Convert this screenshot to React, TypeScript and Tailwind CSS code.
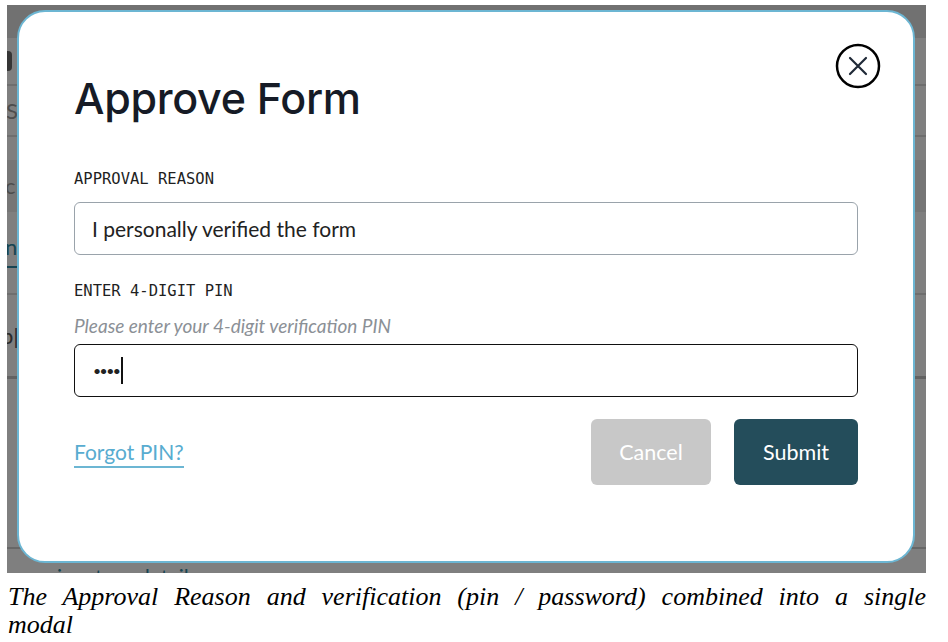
import React from 'react';

const sans = "font-['Lato','Open_Sans','Noto_Sans',sans-serif]";
const mono = "font-['DejaVu_Sans_Mono','Liberation_Mono',monospace]";

const CloseIcon: React.FC = () => (
  <svg width="46" height="46" viewBox="0 0 46 46" fill="none">
    <circle cx="23" cy="23" r="21" stroke="#000" strokeWidth="2.5" />
    <path d="M15 15 L31 31 M31 15 L15 31" stroke="#1f2937" strokeWidth="2.2" strokeLinecap="round" />
  </svg>
);

// the page behind the dialog, only its left edge shows
const BackPage: React.FC = () => (
  <div className={`flex flex-col bg-white ${sans}`}>
    <div className="shrink-0 h-[33px] bg-[#e2e2e2]" />
    <div className="shrink-0 h-[48px] flex items-center border-b-2 border-[#dcdcdc]">
      <div className="ml-[-10px] w-[15px] h-[20px] rounded bg-[#6b6b6b]" />
    </div>
    <div className="shrink-0 h-[51px] flex items-center border-b-2 border-[#dcdcdc] text-[22px] text-[#9a9a9a] leading-none">
      <span className="ml-[-1px]">S</span>
    </div>
    <div className="shrink-0 h-[23px]" />
    <div className="shrink-0 h-[52px] flex items-center bg-[#ececec] text-[22px] text-[#9a9a9a] leading-none">
      <span className="ml-[-2px]">c</span>
    </div>
    <div className="shrink-0 h-[56px] flex items-end">
      <div className="w-[20px] border-b-2 border-[#2f8aa6] text-[22px] leading-none text-[#2f8aa6] pb-[8px]">
        <span className="ml-[-2px]">n</span>
      </div>
    </div>
    <div className="shrink-0 h-[27px] border-b-2 border-[#dcdcdc]" />
    <div className="shrink-0 h-[84px] flex items-center border-b-[3px] border-[#c4c4c4] text-[22px] text-[#555] leading-none">
      <span className="ml-[-6px]">p|</span>
    </div>
    <div className="shrink-0 h-[170px] border-b-2 border-[#cfcfcf]" />
    <div className="shrink-0 mt-[17px] ml-[-4px] text-[21px] leading-none text-[#2f8aa6]">how signature details</div>
  </div>
);

const ApproveModal: React.FC = () => (
  <div className="relative w-[898px] h-[553px] bg-white rounded-[28px] border-2 border-[#6cb6d3] pl-[55px] pr-[55px] pt-[60px]">
    <button type="button" className="absolute right-[32px] top-[31px]">
      <CloseIcon />
    </button>
    <h1 className="font-['Inter',sans-serif] font-medium text-[43px] leading-[52px] text-[#161b26] tracking-[-0.3px]">
      Approve Form
    </h1>
    <div className={`${mono} mt-[45px] text-[15.5px] leading-[20px] text-[#1f1f1f]`}>APPROVAL REASON</div>
    <div className={`${sans} mt-[13px] h-[53px] rounded-md border border-[#9aa3ab] flex items-center px-[17px] text-[21px] text-[#222]`}>
      I personally verified the form
    </div>
    <div className={`${mono} mt-[26px] text-[15.5px] leading-[20px] text-[#1f1f1f]`}>ENTER 4-DIGIT PIN</div>
    <div className={`${sans} mt-[14px] italic text-[19px] leading-[22px] text-[#8b9096]`}>
      Please enter your 4-digit verification PIN
    </div>
    <div className={`${sans} mt-[7px] h-[53px] rounded-md border-[1.5px] border-[#111] flex items-center px-[18px]`}>
      <span className="text-[14px] tracking-[-1.5px] text-[#222]">••••</span>
      <span className="ml-[2px] w-[1.5px] h-[27px] bg-[#111]" />
    </div>
    <div className={`${sans} mt-[22px] flex items-center`}>
      <div className="flex-1">
        <a className="text-[21px] text-[#58acd0] border-b-2 border-[#6cb6d3] pb-[2px]">Forgot PIN?</a>
      </div>
      <button type="button" className="w-[120px] h-[66px] rounded-md bg-[#c8c8c8] text-white text-[21.5px]">
        Cancel
      </button>
      <button type="button" className="ml-[23px] w-[124px] h-[66px] rounded-md bg-[#244d5b] text-white text-[21.5px]">
        Submit
      </button>
    </div>
  </div>
);

export default function App() {
  return (
    <div className="w-[948px] h-[642px] bg-white overflow-hidden">
      <div className="ml-[7px] mt-[5px] w-[919px] h-[568px] relative overflow-hidden">
        <BackPage />
        <div className="absolute inset-0 bg-black/50 pl-[10px] pt-[5px]">
          <ApproveModal />
        </div>
      </div>
      <div className="ml-[8px] w-[918px] mt-[10px] font-['Liberation_Serif','Times_New_Roman',serif] italic text-[26px] leading-[28px] text-black">
        <div className="text-justify [text-align-last:justify]">
          The Approval Reason and verification (pin / password) combined into a single
        </div>
        <div>modal</div>
      </div>
    </div>
  );
}
